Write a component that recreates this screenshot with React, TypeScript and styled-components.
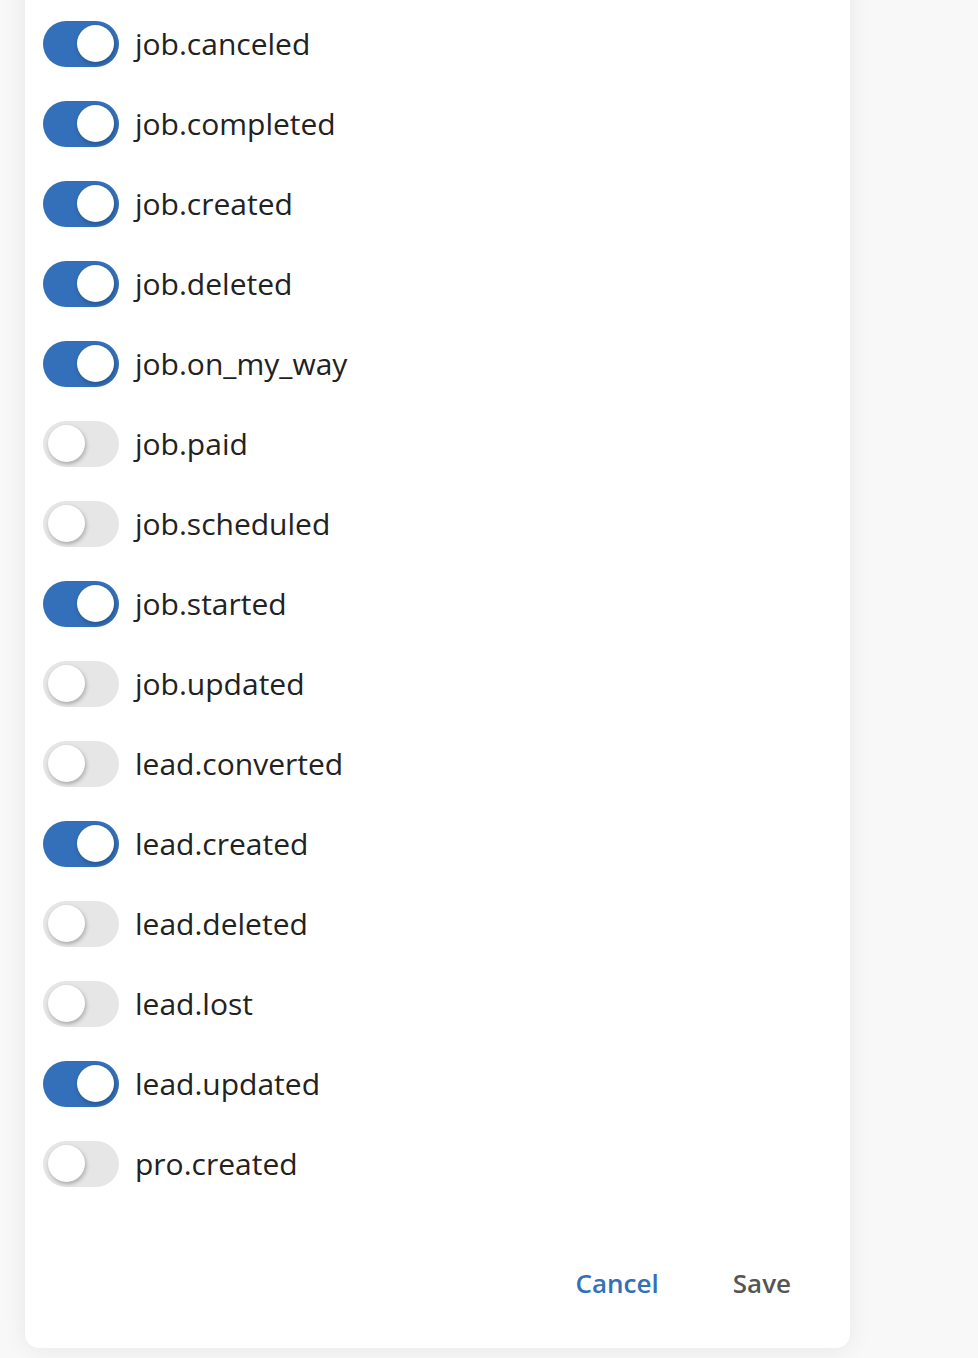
import React, { useState } from "react";
import styled, { createGlobalStyle } from "styled-components";

const GlobalStyle = createGlobalStyle`
  html, body {
    margin: 0;
    padding: 0;
    background: #f8f8f8;
    font-family: "Open Sans", "Liberation Sans", sans-serif;
  }
  * { box-sizing: border-box; }
`;

const initial: [string, boolean][] = [
  ["job.canceled", true],
  ["job.completed", true],
  ["job.created", true],
  ["job.deleted", true],
  ["job.on_my_way", true],
  ["job.paid", false],
  ["job.scheduled", false],
  ["job.started", true],
  ["job.updated", false],
  ["lead.converted", false],
  ["lead.created", true],
  ["lead.deleted", false],
  ["lead.lost", false],
  ["lead.updated", true],
  ["pro.created", false],
];

const App: React.FC = () => {
  const [events, setEvents] = useState(initial);

  const toggle = (i: number) => {
    setEvents(list => list.map((e, j) => (j === i ? [e[0], !e[1]] : e)));
  };

  return (
    <Page>
      <GlobalStyle />
      <Card>
        <List>
          {events.map(([name, on], i) => (
            <Row key={name}>
              <Switch type="button" $on={on} onClick={() => toggle(i)} aria-pressed={on}>
                <Knob $on={on} />
              </Switch>
              <Label>{name}</Label>
            </Row>
          ))}
        </List>
        <Footer>
          <TextButton type="button" $primary>Cancel</TextButton>
          <TextButton type="button">Save</TextButton>
        </Footer>
      </Card>
    </Page>
  );
};

export default App;

const Page = styled.div`
  min-height: 1358px;
  padding: 0 0 11px 25px;
  overflow: hidden;
`;

const Card = styled.section`
  width: 825px;
  margin-top: -30px;
  padding: 34px 18px 0;
  background: #fff;
  border-radius: 0 0 14px 14px;
  box-shadow: 0 2px 24px rgba(0, 0, 0, 0.07);
`;

const List = styled.div`
  display: flex;
  flex-direction: column;
`;

const Row = styled.div`
  display: flex;
  align-items: center;
  height: 80px;
  gap: 16px;
`;

const Switch = styled.button<{ $on: boolean }>`
  position: relative;
  flex: none;
  width: 76px;
  height: 46px;
  padding: 0;
  border: 0;
  border-radius: 23px;
  cursor: pointer;
  background: ${p => (p.$on ? "#3370b9" : "#e6e6e6")};
`;

const Knob = styled.span<{ $on: boolean }>`
  position: absolute;
  top: 4px;
  left: ${p => (p.$on ? "34px" : "5px")};
  width: 37px;
  height: 37px;
  border-radius: 50%;
  background: #fff;
  box-shadow: 1px 2px 4px rgba(0, 0, 0, 0.28);
`;

const Label = styled.span`
  font-size: 30px;
  color: #222;
  line-height: 1;
`;

const Footer = styled.div`
  display: flex;
  justify-content: flex-end;
  align-items: center;
  gap: 58px;
  padding: 57px 33px 43px 0;
`;

const TextButton = styled.button<{ $primary?: boolean }>`
  background: none;
  border: 0;
  padding: 4px 8px;
  font-family: "Open Sans", "Liberation Sans", sans-serif;
  font-size: 26px;
  font-weight: 600;
  cursor: pointer;
  color: ${p => (p.$primary ? "#3370b9" : "#555")};
`;
